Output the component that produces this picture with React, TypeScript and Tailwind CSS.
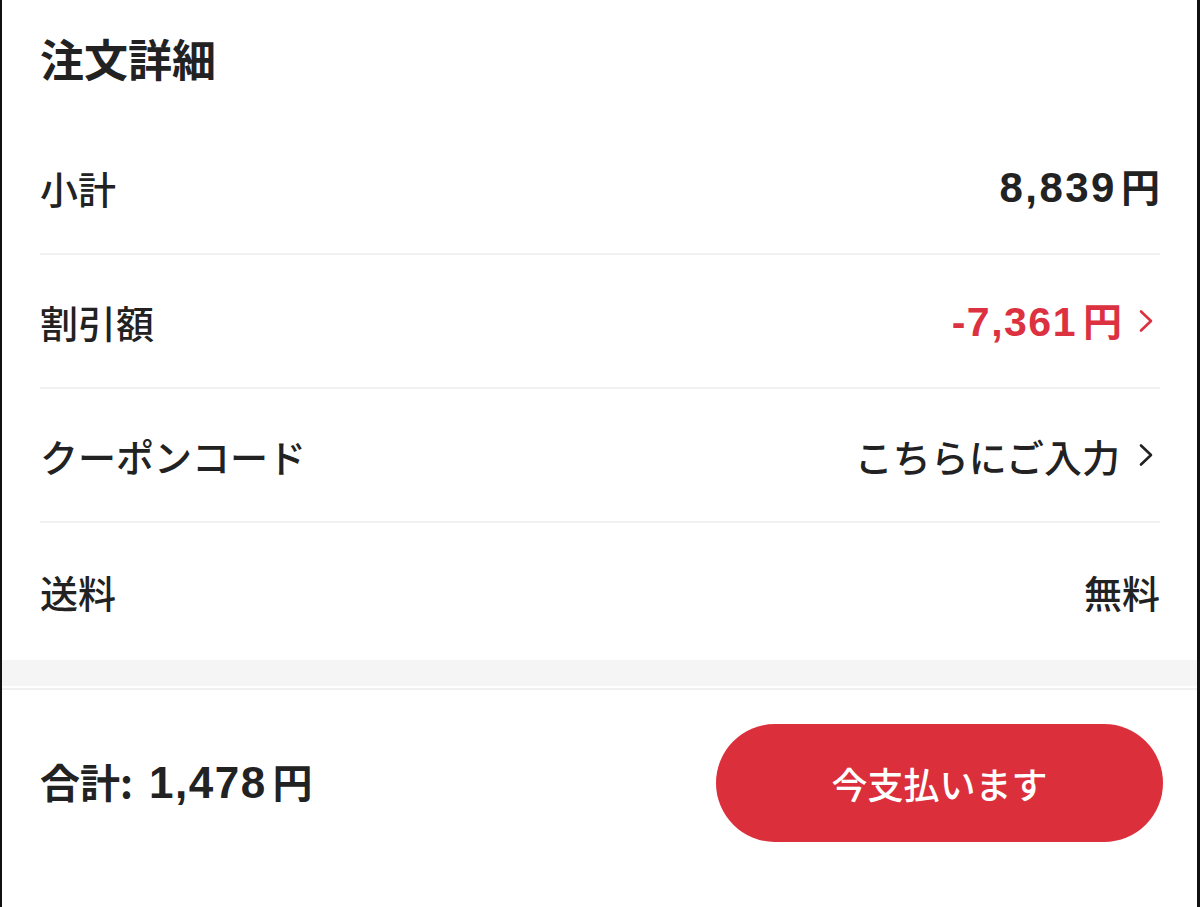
import React from 'react';

const FONT = { fontFamily: '"Liberation Sans", "Noto Sans CJK JP", sans-serif' };
const JP = { fontFamily: '"Noto Sans CJK JP", sans-serif' };

const Chevron: React.FC<{ className?: string }> = ({ className }) => (
    <svg viewBox="0 0 20 24" className={className} fill="none" stroke="currentColor" strokeWidth={2.6} strokeLinecap="round" strokeLinejoin="round">
        <path d="M5 2.5 L15 12 L5 21.5" />
    </svg>
);

interface RowProps {
    label: string;
    last?: boolean;
    children: React.ReactNode;
}

const Row: React.FC<RowProps> = ({ label, last, children }) => (
    <div
        className={`ml-[38px] mr-[37px] flex items-center justify-between ${last ? 'h-[137px]' : 'h-[134px] border-b-2 border-[#f1f1f1]'}`}
    >
        <span className="text-[38px] font-medium text-[#222]" style={JP}>
            {label}
        </span>
        {children}
    </div>
);

export default function App() {
    return (
        <div className="w-[1200px] h-[907px] bg-white border-l-2 border-r-[3px] border-[#111] flex flex-col overflow-hidden" style={FONT}>
            {/* header */}
            <div className="h-[121px] flex items-center pl-[38px] pb-[6px]">
                <h1 className="text-[44px] font-bold text-[#222] leading-none" style={JP}>
                    注文詳細
                </h1>
            </div>

            <Row label="小計">
                <span className="text-[42px] font-bold text-[#222] tracking-[2.5px] leading-none">
                    8,839<span className="ml-[4px] text-[39px] tracking-normal" style={JP}>円</span>
                </span>
            </Row>

            <Row label="割引額">
                <div className="flex items-center gap-[14px] text-[#dc3141]">
                    <span className="text-[41px] font-bold tracking-[1.5px] leading-none">
                        -7,361<span className="ml-[6px] text-[39px] tracking-normal" style={JP}>円</span>
                    </span>
                    <Chevron className="w-[20px] h-[24px] mr-[4px]" />
                </div>
            </Row>

            <Row label="クーポンコード">
                <div className="flex items-center gap-[16px] text-[#222]">
                    <span className="text-[38px] font-medium" style={JP}>
                        こちらにご入力
                    </span>
                    <Chevron className="w-[20px] h-[24px] mr-[4px]" />
                </div>
            </Row>

            <Row label="送料" last>
                <span className="text-[38px] font-medium text-[#222]" style={JP}>
                    無料
                </span>
            </Row>

            {/* separator band */}
            <div className="h-[26px] bg-[#f5f5f5]" />
            <div className="h-[2px]" />
            <div className="h-[2px] bg-[#f0f0f0]" />

            {/* footer */}
            <div className="flex-1 pl-[38px] pr-[34px] pt-[34px]">
                <div className="h-[118px] flex items-center justify-between">
                    <span className="text-[40px] font-bold text-[#222] leading-none flex items-baseline">
                        <span style={JP}>合計:</span>
                        <span className="ml-[16px] text-[44px] tracking-[1.5px]">1,478</span>
                        <span className="ml-[6px]" style={JP}>円</span>
                    </span>
                    <button className="w-[447px] h-[118px] rounded-full bg-[#dc2f3c] text-white text-[36px] font-medium" style={JP}>
                        今支払います
                    </button>
                </div>
            </div>
        </div>
    );
}
